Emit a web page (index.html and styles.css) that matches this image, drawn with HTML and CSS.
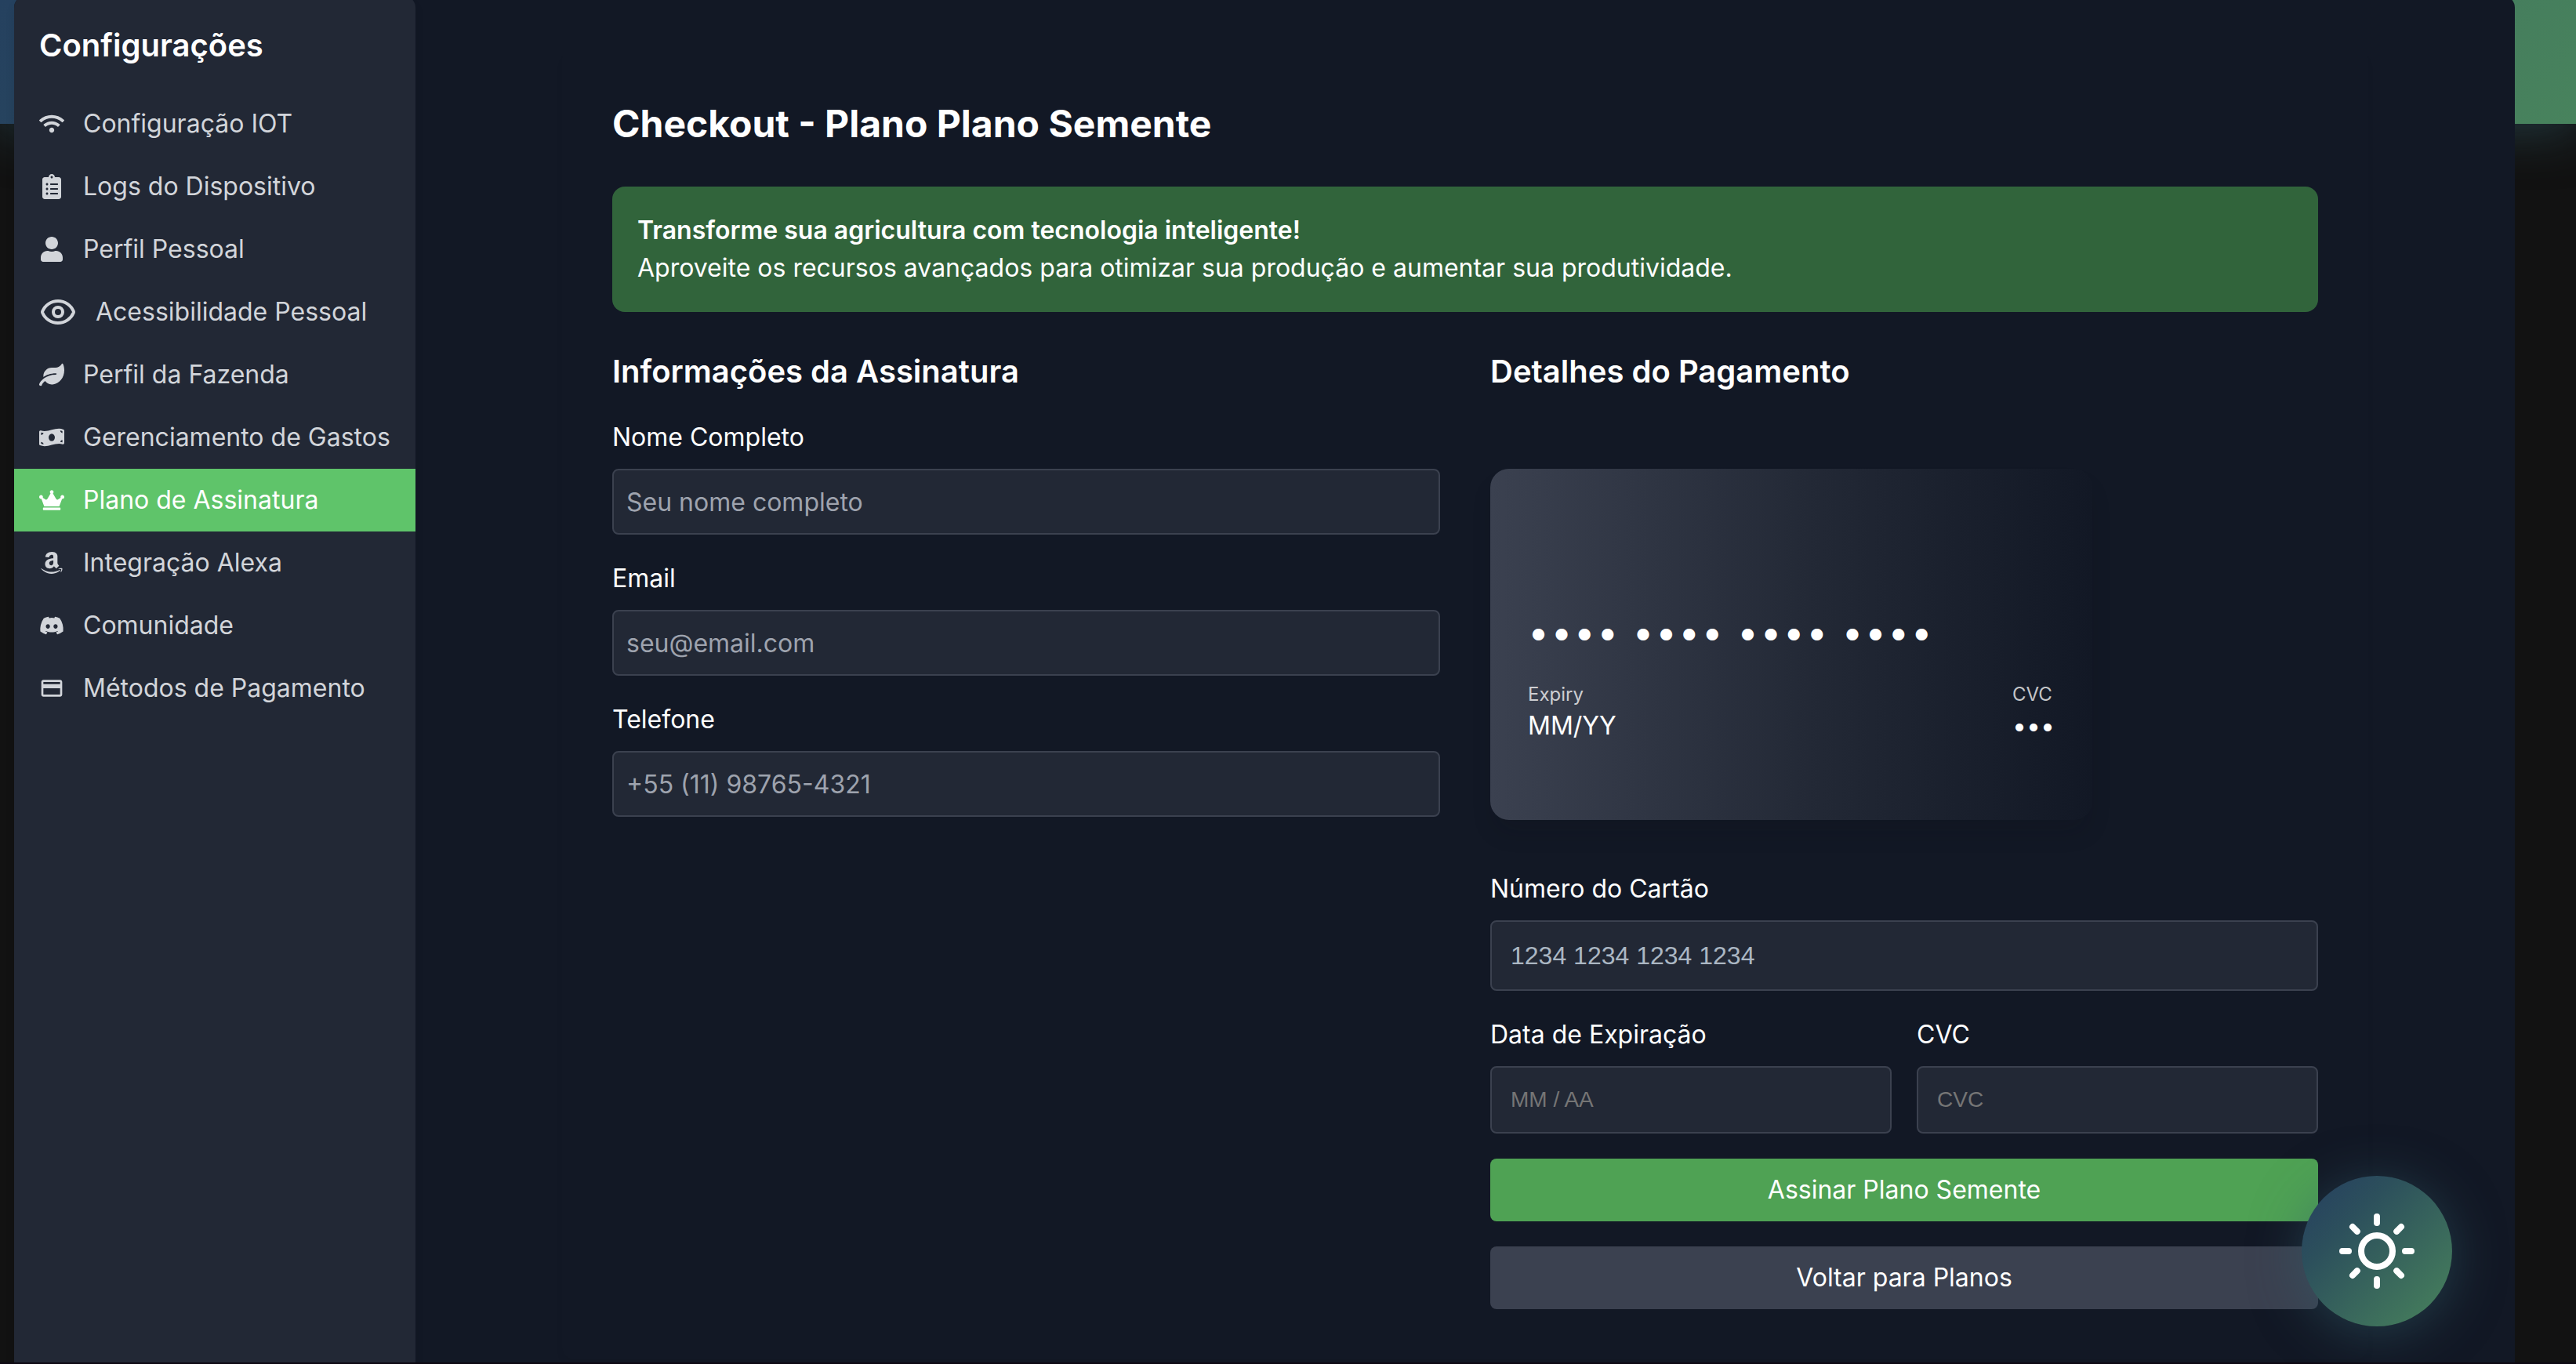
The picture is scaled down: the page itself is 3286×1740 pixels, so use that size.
FILE: index.html
```html
<!DOCTYPE html>
<html lang="pt-BR">
<head>
<meta charset="utf-8">
<title>Checkout - Plano Semente</title>
<meta name="viewport" content="width=device-width, initial-scale=1">
<link rel="stylesheet" href="styles.css">
</head>
<body>
<header class="topbar"></header>
<div class="panel">
  <aside class="sidebar">
    <h2 class="sidebar-title">Configurações</h2>
    <nav class="menu">
      <a class="menu-item" href="#iot">
        <svg class="icon" viewBox="0 0 640 512" aria-hidden="true"><path d="M634.91 154.88C457.74-8.99 182.19-8.93 5.09 154.88c-6.66 6.16-6.79 16.59-.35 22.98l34.24 33.97c6.14 6.1 16.02 6.23 22.4.38 145.92-133.68 371.3-133.71 517.25 0 6.38 5.85 16.26 5.71 22.4-.38l34.24-33.97c6.43-6.39 6.3-16.82-.36-22.98zM320 352c-35.35 0-64 28.65-64 64s28.65 64 64 64 64-28.65 64-64-28.65-64-64-64zm202.67-83.59c-115.26-101.93-290.21-101.82-405.34 0-6.9 6.1-7.12 16.69-.57 23.15l34.44 33.99c6 5.92 15.66 6.32 22.05.8 83.95-72.57 209.74-72.41 293.49 0 6.39 5.52 16.05 5.13 22.05-.8l34.44-33.99c6.56-6.46 6.33-17.06-.56-23.15z"/></svg>
        Configuração IOT
      </a>
      <a class="menu-item" href="#logs">
        <svg class="icon" viewBox="0 0 384 512" aria-hidden="true"><path d="M336 64h-80c0-35.3-28.7-64-64-64s-64 28.7-64 64H48C21.5 64 0 85.5 0 112v352c0 26.5 21.5 48 48 48h288c26.5 0 48-21.5 48-48V112c0-26.5-21.5-48-48-48zM96 424c-13.3 0-24-10.7-24-24s10.7-24 24-24 24 10.7 24 24-10.7 24-24 24zm0-96c-13.3 0-24-10.7-24-24s10.7-24 24-24 24 10.7 24 24-10.7 24-24 24zm0-96c-13.3 0-24-10.7-24-24s10.7-24 24-24 24 10.7 24 24-10.7 24-24 24zm96-192c13.3 0 24 10.7 24 24s-10.7 24-24 24-24-10.7-24-24 10.7-24 24-24zm128 368c0 4.400-3.600 8-8 8H168c-4.400 0-8-3.600-8-8v-16c0-4.400 3.600-8 8-8h144c4.400 0 8 3.600 8 8v16zm0-96c0 4.400-3.600 8-8 8H168c-4.400 0-8-3.600-8-8v-16c0-4.400 3.600-8 8-8h144c4.400 0 8 3.600 8 8v16zm0-96c0 4.400-3.600 8-8 8H168c-4.400 0-8-3.600-8-8v-16c0-4.400 3.600-8 8-8h144c4.400 0 8 3.600 8 8v16z"/></svg>
        Logs do Dispositivo
      </a>
      <a class="menu-item" href="#perfil">
        <svg class="icon" viewBox="0 0 448 512" aria-hidden="true"><path d="M224 256c70.7 0 128-57.3 128-128S294.7 0 224 0 96 57.3 96 128s57.3 128 128 128zm89.600 32h-16.700c-22.200 10.200-46.900 16-72.900 16s-50.600-5.800-72.900-16h-16.700C60.200 288 0 348.200 0 422.400V464c0 26.500 21.500 48 48 48h352c26.500 0 48-21.500 48-48v-41.600c0-74.200-60.200-134.400-134.400-134.400z"/></svg>
        Perfil Pessoal
      </a>
      <a class="menu-item" href="#acessibilidade">
        <svg class="icon icon-large" viewBox="0 0 24 24" aria-hidden="true"><path d="M2.062 12.348a1 1 0 0 1 0-.696 10.750 10.750 0 0 1 19.876 0 1 1 0 0 1 0 .696 10.750 10.750 0 0 1-19.876 0"/><circle cx="12" cy="12" r="3"/></svg>
        Acessibilidade Pessoal
      </a>
      <a class="menu-item" href="#fazenda">
        <svg class="icon" viewBox="0 0 576 512" aria-hidden="true"><path d="M546.2 9.7c-5.600-12.500-21.600-13-28.300-1.200C486.900 62.400 431.400 96 368 96h-80C182 96 96 182 96 288c0 7 .8 13.700 1.500 20.500C161.300 262.800 253.400 224 384 224c8.800 0 16 7.200 16 16s-7.200 16-16 16C132.600 256 26 410.100 2.400 468c-6.600 16.300 1.200 34.900 17.500 41.600 16.400 6.800 35-1.100 41.800-17.300 1.500-3.600 20.900-47.900 71.900-90.600 32.400 43.900 94 85.800 174.900 77.200C465.500 467.500 576 326.700 576 154.300c0-50.200-10.800-102.200-29.800-144.600z"/></svg>
        Perfil da Fazenda
      </a>
      <a class="menu-item" href="#gastos">
        <svg class="icon" viewBox="0 0 640 512" aria-hidden="true"><path d="M621.16 54.46C582.37 38.19 543.55 32 504.75 32c-123.17-.01-246.33 62.34-369.5 62.34-30.89 0-61.76-3.92-92.65-13.72-3.47-1.1-6.95-1.62-10.35-1.62C15.04 79 0 92.32 0 110.81v317.26c0 12.63 7.23 24.6 18.84 29.46C57.63 473.81 96.45 480 135.25 480c123.17 0 246.34-62.35 369.51-62.35 30.89 0 61.76 3.92 92.65 13.72 3.47 1.1 6.95 1.62 10.35 1.62 17.21 0 32.25-13.32 32.25-31.81V83.93c-.01-12.64-7.24-24.6-18.85-29.47zM48 132.22c20.12 5.04 41.12 7.57 62.72 8.93C104.84 170.54 79 192.69 48 192.69v-60.47zm0 285v-47.78c34.37 0 62.18 27.27 63.71 61.4-22.53-1.81-43.59-6.31-63.71-13.62zM320 352c-44.19 0-80-42.99-80-96 0-53.02 35.82-96 80-96s80 42.98 80 96c0 53.03-35.83 96-80 96zm272 27.78c-17.52-4.39-35.71-6.85-54.32-8.44 5.87-26.08 27.5-45.88 54.32-49.28v57.72zm0-236.11c-30.89-3.91-54.86-29.7-55.81-61.55 19.54 2.17 38.09 6.23 55.81 12.66v48.89z"/></svg>
        Gerenciamento de Gastos
      </a>
      <a class="menu-item active" href="#plano" aria-current="page">
        <svg class="icon" viewBox="0 0 640 512" aria-hidden="true"><path d="M528 448H112c-8.800 0-16 7.200-16 16v32c0 8.800 7.200 16 16 16h416c8.800 0 16-7.200 16-16v-32c0-8.800-7.200-16-16-16zm64-320c-26.500 0-48 21.500-48 48 0 7.100 1.600 13.700 4.400 19.800L476 239.200c-15.400 9.200-35.300 4-44.200-11.600L350.300 85C361 76.200 368 63 368 48c0-26.500-21.500-48-48-48s-48 21.500-48 48c0 15 7 28.200 17.700 37l-81.500 142.600c-8.900 15.600-28.900 20.800-44.200 11.600l-72.300-43.400c2.700-6 4.400-12.700 4.400-19.800 0-26.500-21.500-48-48-48S0 149.500 0 176s21.500 48 48 48c2.600 0 5.200-.4 7.700-.8L128 416h384l72.300-192.800c2.500.4 5.100.8 7.700.8 26.500 0 48-21.500 48-48s-21.500-48-48-48z"/></svg>
        Plano de Assinatura
      </a>
      <a class="menu-item" href="#alexa">
        <svg class="icon" viewBox="0 0 448 512" aria-hidden="true"><path d="M257.2 162.7c-48.700 1.800-169.500 15.500-169.500 117.500 0 109.500 138.300 114 183.500 43.200 6.500 10.200 35.400 37.500 45.300 46.800l56.800-56S341 288.900 341 261.400V114.300C341 89 316.500 32 228.700 32 140.700 32 94 87 94 136.300l73.500 6.800c16.300-49.500 54.200-49.500 54.200-49.500 40.700-.1 35.500 29.800 35.500 69.100zm0 86.800c0 80-84.200 68-84.200 17.200 0-47.200 50.500-56.700 84.200-57.800v40.600zm136 163.500c-7.700 10-70 67-174.500 67S34.200 408.500 9.700 379c-6.800-7.700 1-11.300 5.500-8.300C88.500 415.200 203 488.500 387.700 401c7.500-3.700 13.300 2 5.500 12zm39.800 2.200c-6.500 15.800-16 26.800-21.200 31-5.500 4.500-9.500 2.700-6.500-3.800s19.300-46.500 12.700-55c-6.500-8.300-37-4.300-48-3.200-10.800 1-13 2-14-.3-2.300-5.700 21.700-15.500 37.500-17.500 15.700-1.800 41-.8 46 5.700 3.700 5.100 0 27.100-6.500 43.100z"/></svg>
        Integração Alexa
      </a>
      <a class="menu-item" href="#comunidade">
        <svg class="icon" viewBox="0 0 640 512" aria-hidden="true"><path d="M524.531,69.836a1.5,1.5,0,0,0-.764-.7A485.065,485.065,0,0,0,404.081,32.03a1.816,1.816,0,0,0-1.923.91,337.461,337.461,0,0,0-14.9,30.6,447.848,447.848,0,0,0-134.426,0,309.541,309.541,0,0,0-15.135-30.6,1.89,1.89,0,0,0-1.924-.91A483.689,483.689,0,0,0,116.085,69.137a1.712,1.712,0,0,0-.788.676C39.068,183.651,18.186,294.69,28.43,404.354a2.016,2.016,0,0,0,.765,1.375A487.666,487.666,0,0,0,176.02,479.918a1.9,1.9,0,0,0,2.063-.676A348.2,348.2,0,0,0,208.12,430.4a1.86,1.86,0,0,0-1.019-2.588,321.173,321.173,0,0,1-45.868-21.853,1.885,1.885,0,0,1-.185-3.126c3.082-2.309,6.166-4.711,9.109-7.137a1.819,1.819,0,0,1,1.9-.256c96.229,43.917,200.41,43.917,295.5,0a1.812,1.812,0,0,1,1.924.233c2.944,2.426,6.027,4.851,9.132,7.16a1.884,1.884,0,0,1-.162,3.126,301.407,301.407,0,0,1-45.89,21.83,1.875,1.875,0,0,0-1,2.611,391.055,391.055,0,0,0,30.014,48.815,1.864,1.864,0,0,0,2.063.7A486.048,486.048,0,0,0,610.7,405.729a1.882,1.882,0,0,0,.765-1.352C623.729,277.594,590.933,167.465,524.531,69.836ZM222.491,337.58c-28.972,0-52.844-26.587-52.844-59.239S193.056,219.1,222.491,219.1c29.665,0,53.306,26.82,52.843,59.239C275.334,310.993,251.924,337.58,222.491,337.58Zm195.38,0c-28.971,0-52.843-26.587-52.843-59.239S388.437,219.1,417.871,219.1c29.667,0,53.307,26.82,52.844,59.239C470.715,310.993,447.538,337.58,417.871,337.58Z"/></svg>
        Comunidade
      </a>
      <a class="menu-item" href="#pagamento">
        <svg class="icon" viewBox="0 0 24 24" aria-hidden="true"><path d="M20 4H4c-1.110 0-1.990.89-1.990 2L2 18c0 1.110.89 2 2 2h16c1.110 0 2-.89 2-2V6c0-1.110-.89-2-2-2zm0 14H4v-6h16v6zm0-10H4V6h16v2z"/></svg>
        Métodos de Pagamento
      </a>
    </nav>
  </aside>

  <main class="content">
    <form class="checkout">
      <h1 class="title">Checkout - Plano Plano Semente</h1>
      <div class="banner">
        <strong>Transforme sua agricultura com tecnologia inteligente!</strong>
        <p>Aproveite os recursos avançados para otimizar sua produção e aumentar sua produtividade.</p>
      </div>
      <div class="columns">
        <section class="column">
          <h2 class="subtitle">Informações da Assinatura</h2>
          <div class="field">
            <label for="nome">Nome Completo</label>
            <input class="input" id="nome" type="text" placeholder="Seu nome completo">
          </div>
          <div class="field">
            <label for="email">Email</label>
            <input class="input" id="email" type="email" placeholder="seu@email.com">
          </div>
          <div class="field">
            <label for="telefone">Telefone</label>
            <input class="input" id="telefone" type="tel" placeholder="+55 (11) 98765-4321">
          </div>
        </section>

        <section class="column">
          <h2 class="subtitle">Detalhes do Pagamento</h2>
          <div class="card">
            <div class="card-number">•••• •••• •••• ••••</div>
            <div class="card-row">
              <div>
                <div class="card-label">Expiry</div>
                <div>MM/YY</div>
              </div>
              <div>
                <div class="card-label">CVC</div>
                <div>•••</div>
              </div>
            </div>
          </div>
          <div class="field">
            <label for="cartao">Número do Cartão</label>
            <input class="input secure secure-number" id="cartao" type="text" placeholder="1234 1234 1234 1234">
          </div>
          <div class="field-pair">
            <div class="field">
              <label for="validade">Data de Expiração</label>
              <input class="input secure" id="validade" type="text" placeholder="MM / AA">
            </div>
            <div class="field">
              <label for="cvc">CVC</label>
              <input class="input secure" id="cvc" type="text" placeholder="CVC">
            </div>
          </div>
          <button class="button primary" type="submit">Assinar Plano Semente</button>
          <button class="button secondary" type="button">Voltar para Planos</button>
        </section>
      </div>
    </form>
  </main>
</div>

<button class="theme-toggle" type="button" aria-label="Alternar tema">
  <svg viewBox="0 0 24 24" aria-hidden="true">
    <circle cx="12" cy="12" r="5"/>
    <path d="M12 1v2M12 21v2M1 12h2M21 12h2M4.250 4.250l1.450 1.450M18.300 18.300l1.450 1.450M4.250 19.750l1.450-1.450M18.300 5.700l1.450-1.450"/>
  </svg>
</button>
</body>
</html>
```
FILE: styles.css
```css
:root {
  --page: #121212;
  --panel: #121825;
  --surface: #222835;
  --line: #3b414f;
  --text-muted: #d2d5da;
  --placeholder: #9ea3ae;
}

* {
  box-sizing: border-box;
  margin: 0;
}

body {
  min-height: 100vh;
  display: flex;
  flex-direction: column;
  border-bottom: 2px solid #0d0812;
  background: var(--page);
  color: #fff;
  font: 32px/48px Inter, sans-serif;
}

.topbar {
  height: 158px;
  flex: none;
  background: linear-gradient(135deg, #25415f, #2d4f5c 30%, #48835d);
  box-shadow: 0 8px 64px rgba(52, 96, 110, 0.5);
}

/* The settings panel overlaps the top bar. */
.panel {
  position: relative;
  flex: 1;
  display: flex;
  margin: -164px 78px 0 18px;
  border-radius: 16px 16px 0 0;
  background: var(--panel);
}

.sidebar {
  width: 512px;
  flex: none;
  padding-top: 36px;
  border-radius: 16px 16px 0 0;
  background: var(--surface);
  box-shadow: 0 8px 12px rgba(0, 0, 0, 0.1);
}

.sidebar-title {
  padding: 0 32px;
  margin-bottom: 32px;
  font-size: 40px;
  line-height: 56px;
  font-weight: 600;
}

.menu {
  display: flex;
  flex-direction: column;
}

.menu-item {
  display: flex;
  align-items: center;
  gap: 24px;
  padding: 16px 32px;
  color: var(--text-muted);
  text-decoration: none;
  white-space: nowrap;
}

.menu-item.active {
  background: #5fc46a;
  color: #fff;
}

.icon {
  width: 32px;
  height: 32px;
  flex: none;
  fill: currentColor;
}

.icon-large {
  width: 48px;
  height: 48px;
  fill: none;
  stroke: currentColor;
  stroke-width: 2;
}

.content {
  flex: 1;
  min-width: 0;
  padding: 68px 64px 0;
}

.checkout {
  max-width: 2304px;
  margin: 0 auto;
  padding: 64px;
  border-radius: 16px;
  box-shadow: 0 8px 12px -2px rgba(0, 0, 0, 0.05);
}

.title {
  margin-bottom: 48px;
  font-size: 48px;
  line-height: 64px;
  font-weight: 700;
}

.banner {
  margin-bottom: 48px;
  padding: 32px;
  border-radius: 16px;
  background: #31643b;
}

.banner strong {
  display: block;
  font-weight: 600;
}

.columns {
  display: grid;
  grid-template-columns: 1fr 1fr;
  gap: 64px;
}

.column {
  display: flex;
  flex-direction: column;
  gap: 32px;
}

.subtitle {
  font-size: 40px;
  line-height: 56px;
  font-weight: 600;
}

.field {
  display: flex;
  flex-direction: column;
  gap: 16px;
}

.field-pair {
  display: grid;
  grid-template-columns: 1fr 1fr;
  gap: 32px;
}

.input {
  width: 100%;
  height: 84px;
  padding: 16px;
  border: 2px solid var(--line);
  border-radius: 8px;
  background: var(--surface);
  color: #fff;
  font: inherit;
}

.input::placeholder {
  color: var(--placeholder);
  opacity: 1;
}

.input.secure {
  height: 86px;
  padding: 24px;
  font: 28px/34px "Liberation Sans", Arial, sans-serif;
}

.input.secure::placeholder {
  color: #757575;
}

.input.secure-number {
  height: 90px;
  font-size: 32px;
  line-height: 38px;
}

.input.secure-number::placeholder {
  color: #abb7c3;
}

.card {
  width: 768px;
  max-width: 100%;
  height: 448px;
  margin: 64px 0 32px;
  padding: 176px 48px 48px;
  border-radius: 24px;
  background: linear-gradient(90deg, #3b4150, #222835 55%, #121825);
  box-shadow: 0 20px 30px -6px rgba(16, 12, 20, 0.15);
}

.card-number {
  margin-bottom: 32px;
  font-size: 48px;
  line-height: 64px;
  letter-spacing: 0.05em;
  white-space: nowrap;
}

.card-row {
  display: flex;
  justify-content: space-between;
}

.card-label {
  color: rgba(255, 255, 255, 0.75);
  font-size: 24px;
  line-height: 32px;
}

.button {
  padding: 16px 32px;
  border: 0;
  border-radius: 8px;
  color: #fff;
  font: inherit;
}

.primary {
  background: #4fa254;
}

.secondary {
  background: #3b4150;
}

.theme-toggle {
  position: fixed;
  right: 158px;
  bottom: 48px;
  width: 192px;
  height: 192px;
  display: grid;
  place-items: center;
  padding: 0;
  border: 0;
  border-radius: 50%;
  background: linear-gradient(135deg, #253e60, #2c4f5c 30%, #48835c);
  box-shadow: 0 8px 64px rgba(52, 96, 110, 0.5);
}

.theme-toggle svg {
  width: 96px;
  height: 96px;
  fill: none;
  stroke: #fff;
  stroke-width: 2;
  stroke-linecap: round;
}
```
